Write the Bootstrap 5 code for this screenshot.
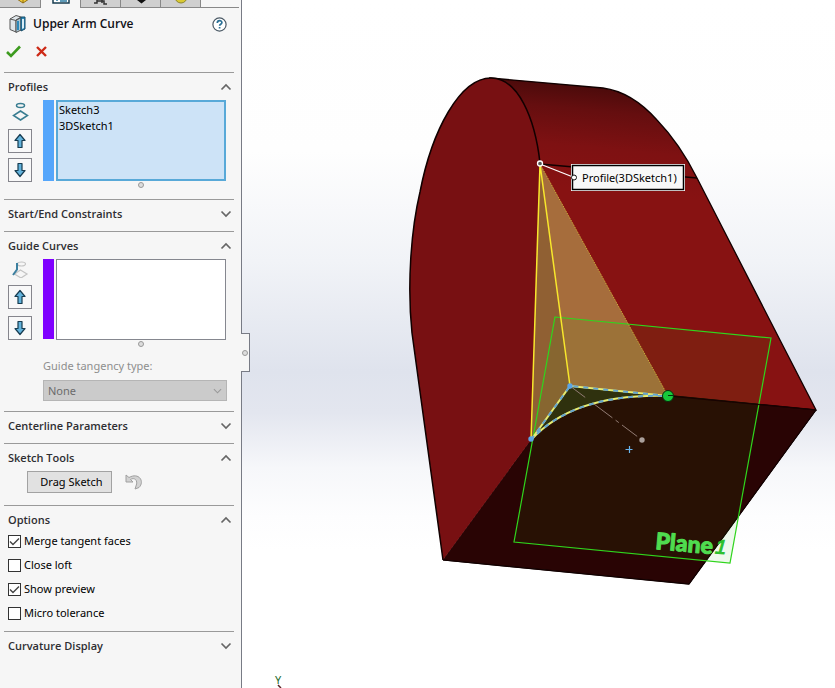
<!DOCTYPE html>
<html lang="en">
<head>
<meta charset="utf-8">
<meta name="viewport" content="width=device-width, initial-scale=1">
<title>Upper Arm Curve</title>
<link href="https://cdn.jsdelivr.net/npm/bootstrap@5.3.0/dist/css/bootstrap.min.css" rel="stylesheet">
<style>
body{font-family:"Noto Sans","Open Sans",sans-serif;font-size:11px;line-height:16px;color:#000;background:#fff}
.pm{width:242px;background:#f6f6f6;border-right:1px solid #787b85}
.tabs{height:8px;padding-right:2px}
.tabs::after{content:"";flex:1;border-bottom:1px solid #888}
.ptab{width:40px;height:8px;padding:0;border:0;border-right:1px solid #888;border-bottom:1px solid #888;background:#cfcfcf;overflow:hidden;display:flex;justify-content:center}
.ptab:first-child{width:41px}
.ptab.on{background:#f6f6f6;border-bottom:0}
.ptab svg{flex:none}
.title-row{height:32px;padding:0 14px 0 8px}
.title-row h1{font-family:"Open Sans",sans-serif;font-size:12px;line-height:20px;font-weight:600;margin:0 0 0 7px;color:#111116}
.plain{border:0;background:none;padding:0;display:flex;align-items:center}
.okrow{height:32px;padding:0 6px 10px;gap:15px}
.sec{margin:0 7px 0 4px;border-top:1px solid #9a9a9a}
.sec-head{width:100%;height:27px;padding:0 2px 0 4px;font-family:"Open Sans",sans-serif;font-weight:600;color:#2e2e32}
.shut{padding-bottom:4px}
.sec-body{padding:0 8px 11px 4px}
.icol{width:24px;margin-right:11px;gap:5px}
.icol.wide{gap:7px}
.arrow{width:24px;height:24px;border:1px solid #85858c;background:#f8f8f8;padding:0;display:flex;align-items:center;justify-content:center}
.colour{width:11px;height:81px;margin-right:2px}
.blue{background:#55a6fb}
.violet{background:#7f00ff;height:80px}
.picks{height:81px;border:1px solid #85878f;background:#fff;overflow:hidden;padding:2px}
.picks.live{border:2px solid #58a9d8;background:#cde3f7;padding:0 1px}
.grip{width:6px;height:6px;border:1px solid #999;border-radius:50%;background:#ddd}
.picks + .grip{margin-top:1px}
.tangency{padding:0 7px 10px 39px}
.tangency label{color:#8e8e8e;margin-bottom:6px}
.type-sel{height:21px;border:1px solid #b5b5b5;color:#6c6c6c;font-size:11px;line-height:16px;padding:0 4px;appearance:none;opacity:1;background:#cbcbcb url("data:image/svg+xml,%3Csvg xmlns='http://www.w3.org/2000/svg' viewBox='0 0 10 6'%3E%3Cpath d='M1 1l4 4 4-4' fill='none' stroke='%23999' stroke-width='1.2'/%3E%3C/svg%3E") no-repeat right 4px center/9px 6px}
.drag-row{padding:0 0 12px 23px;gap:13px}
.drag{width:85px;height:22px;border:1px solid #a2a2a2;background:#e1e1e1;padding:0 0 0 4px}
.opts{padding:0 0 10px 4px}
.opt{height:16px;gap:3px}
.opt input{appearance:none;width:13px;height:13px;border:1px solid #333;background:#fff}
.opt input:checked{background:#fff url("data:image/svg+xml,%3Csvg xmlns='http://www.w3.org/2000/svg' viewBox='0 0 11 11'%3E%3Cpath d='M1 5.500l3 3 6-6' fill='none' stroke='%23444' stroke-width='1.400'/%3E%3C/svg%3E")}
.stage{min-width:0;background:linear-gradient(#fff 0,#fefefe 22%,#f1f3f7 38%,#dfe3ed 54%,#e3e6ef 60%,#f6f7fa 68%,#fdfdfe 75%,#fff 80%)}
.model{width:100%;height:100%;display:block}
.flyout{left:-1px;top:333px;width:9px;height:39px;background:#f6f6f6;border:1px solid #787b85;border-left:0;padding:0;display:flex;align-items:center;justify-content:center}
.callout-text{font-size:11px}
.plane-name{font-family:Lato,sans-serif;font-size:23px;font-weight:900;fill:#4fdc4f;stroke:#4fdc4f;stroke-width:1px;stroke-linejoin:round}
.plane-num{font-family:"Liberation Sans",sans-serif;font-size:20px;font-style:italic;fill:#2bc02b;stroke:#2bc02b;stroke-width:1px}
.axis-name{font-size:11px;fill:#1d6b2d}
</style>
<script src="https://cdn.jsdelivr.net/npm/bootstrap@5.3.0/dist/js/bootstrap.bundle.min.js"></script>
</head>
<body>
<svg class="d-none" aria-hidden="true">
  <symbol id="up" viewBox="0 0 14 16"><path d="M7 1.500L12 7.500H9V14.500H5V7.500H2Z" fill="#63b3dc" stroke="#173c50" stroke-width="1.200" stroke-linejoin="round"/></symbol>
  <symbol id="down" viewBox="0 0 14 16"><path d="M7 14.500L12 8.500H9V1.500H5V8.500H2Z" fill="#63b3dc" stroke="#173c50" stroke-width="1.200" stroke-linejoin="round"/></symbol>
  <symbol id="chev-up" viewBox="0 0 12 8"><path d="M1.500 6.500L6 2 10.500 6.500" fill="none" stroke="#666" stroke-width="1.700"/></symbol>
  <symbol id="chev-down" viewBox="0 0 12 8"><path d="M1.500 1.500L6 6 10.500 1.500" fill="none" stroke="#666" stroke-width="1.700"/></symbol>
</svg>
<div class="d-flex vh-100 overflow-hidden">
  <aside class="pm flex-shrink-0">
    <nav class="tabs d-flex" aria-label="Manager tabs">
      <button class="ptab" aria-label="Feature tree"><svg width="20" height="7"><path d="M7 -1l6 4 6-4" fill="#f5cf3a" stroke="#8c6a12"/><path d="M13 0v3" stroke="#8c6a12"/></svg></button>
      <button class="ptab on" aria-label="Properties"><svg width="20" height="7"><path d="M2 0v3h16V0" fill="#fff" stroke="#173c50" stroke-width="1.500"/><path d="M5 0h2M9 1h7" stroke="#2a7ba3" stroke-width="1.500"/></svg></button>
      <button class="ptab" aria-label="Configurations"><svg width="20" height="7"><path d="M3 3h3V0M6 1h7v3h3M11 0v3" fill="none" stroke="#333" stroke-width="1.500"/></svg></button>
      <button class="ptab" aria-label="Dimensions"><svg width="20" height="7"><path d="M6 0h9l-4.500 3.500z" fill="#111"/></svg></button>
      <button class="ptab" aria-label="Appearances"><svg width="20" height="7"><circle cx="10" cy="-3" r="6" fill="#d9c933" stroke="#8b8530"/></svg></button>
    </nav>
    <header class="title-row d-flex align-items-center">
      <svg width="18" height="20" viewBox="0 0 18 20"><path d="M2 5l6-3.500 5 1.500-5 3v12l-6-2.500z" fill="#dfe6ea" stroke="#555"/><path d="M2 5l6 1.500 5-3" fill="none" stroke="#555"/><path d="M8 6.500l5-3v12.500l-5 2.500z" fill="#a9c6d4" stroke="#555"/><path d="M13 3l4 0v12l-4 2z" fill="#2c8abb" stroke="#174b67"/><path d="M10 7v9" stroke="#2c8abb" stroke-width="2"/><path d="M14 5h2v9l-2 1z" fill="#d9edf6"/></svg>
      <h1 class="flex-grow-1">Upper Arm Curve</h1>
      <button class="plain" aria-label="Help"><svg width="15" height="15" viewBox="0 0 15 15"><circle cx="7.500" cy="7.500" r="6.600" fill="#fff" stroke="#4c5a66" stroke-width="1.200"/><path d="M5.300 6c0-3 4.600-3 4.600-.4 0 1.600-2.300 1.700-2.300 3.200M7.600 10v1.600" fill="none" stroke="#2b7096" stroke-width="1.700"/></svg></button>
    </header>
    <div class="okrow d-flex align-items-center">
      <button class="plain" aria-label="OK"><svg width="15" height="13" viewBox="0 0 15 13"><path d="M1 7L5 11 14 1.500" fill="none" stroke="#3d9b1f" stroke-width="2.600"/></svg></button>
      <button class="plain" aria-label="Cancel"><svg width="11" height="11" viewBox="0 0 11 11"><path d="M1 1l9 9M10 1L1 10" stroke="#cd2a17" stroke-width="2.400"/></svg></button>
    </div>

    <section class="sec">
      <button class="plain sec-head justify-content-between">Profiles<svg width="12" height="8"><use href="#chev-up"/></svg></button>
      <div class="sec-body d-flex">
        <div class="icol d-flex flex-column">
          <svg width="24" height="24" viewBox="0 0 24 24" fill="none" stroke="#397d91" stroke-width="1.500"><ellipse cx="12.500" cy="5.500" rx="4" ry="2"/><path d="M12.500 11l7 4.500-7 4.500-7-4.500z"/></svg>
          <button class="arrow" aria-label="Move profile up"><svg width="14" height="16"><use href="#up"/></svg></button>
          <button class="arrow" aria-label="Move profile down"><svg width="14" height="16"><use href="#down"/></svg></button>
        </div>
        <div class="colour blue"></div>
        <div class="flex-grow-1 d-flex flex-column align-items-center">
          <div class="picks live w-100"><div>Sketch3</div><div>3DSketch1</div></div>
          <span class="grip"></span>
        </div>
      </div>
    </section>

    <section class="sec shut"><button class="plain sec-head justify-content-between">Start/End Constraints<svg width="12" height="8"><use href="#chev-down"/></svg></button></section>

    <section class="sec">
      <button class="plain sec-head justify-content-between">Guide Curves<svg width="12" height="8"><use href="#chev-up"/></svg></button>
      <div class="sec-body d-flex">
        <div class="icol wide d-flex flex-column">
          <svg width="24" height="19" viewBox="0 0 24 19" fill="none"><g stroke="#c3c3c3" stroke-width="1.200"><ellipse cx="13.500" cy="5" rx="4" ry="2"/><path d="M12.500 11l6.500 4-6 4-6.500-4z"/></g><path d="M9 4v6.500L5 16" stroke="#3b7f9f" stroke-width="2"/></svg>
          <button class="arrow" aria-label="Move guide up"><svg width="14" height="16"><use href="#up"/></svg></button>
          <button class="arrow" aria-label="Move guide down"><svg width="14" height="16"><use href="#down"/></svg></button>
        </div>
        <div class="colour violet"></div>
        <div class="flex-grow-1 d-flex flex-column align-items-center">
          <div class="picks w-100"></div>
          <span class="grip"></span>
        </div>
      </div>
      <div class="tangency">
        <label class="d-block" for="tangency">Guide tangency type:</label>
        <select class="type-sel d-block w-100" id="tangency" disabled><option>None</option></select>
      </div>
    </section>

    <section class="sec shut"><button class="plain sec-head justify-content-between">Centerline Parameters<svg width="12" height="8"><use href="#chev-down"/></svg></button></section>

    <section class="sec">
      <button class="plain sec-head justify-content-between">Sketch Tools<svg width="12" height="8"><use href="#chev-up"/></svg></button>
      <div class="drag-row d-flex align-items-center">
        <button class="drag">Drag Sketch</button>
        <button class="plain" aria-label="Undo drag"><svg width="19" height="18" viewBox="0 0 19 18"><path d="M1 2v7h7L5.500 6.500C9 4 13.500 7 11 13l-1 3 4-1.500C20 8.500 14-1 4 4.500z" fill="#d2d2d2" stroke="#a0a0a0"/></svg></button>
      </div>
    </section>

    <section class="sec">
      <button class="plain sec-head justify-content-between">Options<svg width="12" height="8"><use href="#chev-up"/></svg></button>
      <div class="opts d-flex flex-column gap-2">
        <label class="opt d-flex align-items-center"><input type="checkbox" checked>Merge tangent faces</label>
        <label class="opt d-flex align-items-center"><input type="checkbox">Close loft</label>
        <label class="opt d-flex align-items-center"><input type="checkbox" checked>Show preview</label>
        <label class="opt d-flex align-items-center"><input type="checkbox">Micro tolerance</label>
      </div>
    </section>

    <section class="sec"><button class="plain sec-head justify-content-between">Curvature Display<svg width="12" height="8"><use href="#chev-down"/></svg></button></section>
  </aside>

  <main class="stage flex-grow-1 position-relative">
    <svg class="model" viewBox="242 0 593 688" preserveAspectRatio="xMinYMin meet" role="img" aria-label="Loft preview of the upper arm">
      <defs>
        <linearGradient id="roll" gradientUnits="userSpaceOnUse" x1="600" y1="84" x2="590" y2="190">
          <stop offset="0" stop-color="#480a0a"/><stop offset=".25" stop-color="#650e0f"/><stop offset=".6" stop-color="#7e1112"/><stop offset="1" stop-color="#871212"/>
        </linearGradient>
      </defs>
      <path d="M490 78L603 88Q632 92 657 120Q680 144 697 178L780 340 816 410 570 386 539 163z" fill="url(#roll)" stroke="#100" stroke-width="1.300"/>
      <path d="M443 560L531 440 570 386 816 410 689 584z" fill="#290404" stroke="#180202"/>
      <path d="M443 560L412 333C407 285 411 230 420 192C432 130 460 78 491 78C518 78 535 118 540 163L531 440z" fill="#781012"/>
      <path d="M443 560L412 333C407 285 411 230 420 192C432 130 460 78 491 78C518 78 535 118 540 163" fill="none" stroke="#100" stroke-width="1.500"/>
      <path d="M443 560L689 584 816 410" fill="none" stroke="#100" stroke-width="1.200"/>
      <path d="M540 164L697 178" stroke="#100" stroke-width="1.300"/>
      <path d="M540 164L570 386 531 440z" fill="#906033"/>
      <path d="M540 164L668 396 570 386z" fill="#a66d3c"/>
      <path d="M570 386L668 396Q574 393 531 440z" fill="#30270f"/>
      <path d="M555 317L771 338 730 563 514 542z" fill="#20b010" fill-opacity=".08" stroke="#30d51d" stroke-width="1.200"/>
      <path d="M668 396L816 410" stroke="#180202"/>
      <path d="M540 164L531 440M540 164L570 386" stroke="#f8e72c" stroke-width="1.500"/>
      <path d="M540 164L668 396" stroke="#d4b83b" stroke-dasharray="1 1"/>
      <g fill="none" stroke-width="2"><path d="M531 440L570 386 668 396Q574 393 531 440" stroke="#e6ed72"/><path d="M531 440L570 386 668 396Q574 393 531 440" stroke="#64a4d2" stroke-dasharray="5 5"/></g>
      <path d="M570 386L642 440" stroke="#917b73" stroke-dasharray="19 11 23 4 4 4"/>
      <circle cx="642" cy="440" r="2.700" fill="#aaa09c"/>
      <path d="M625.500 449.500h7M629.500 446v7" fill="none" stroke="#69b5ef" stroke-width="1.200"/>
      <circle cx="570" cy="386" r="2.700" fill="#5ba4e5"/><circle cx="531" cy="439" r="2.700" fill="#5ba4e5"/>
      <circle cx="668" cy="396" r="5.500" fill="#16c83b" stroke="#062d0c"/><path d="M668 395.500h5" stroke="#062d0c"/>
      <g transform="rotate(5 654 549)"><text class="plane-name" x="655" y="549">Plane</text><text class="plane-num" x="715" y="548">1</text></g>
      <rect x="571" y="164" width="114" height="27" fill="#fff"/><rect x="572.500" y="165.500" width="111" height="24" fill="#f8f8f8" stroke="#000" stroke-width="1.500"/>
      <path d="M540 164L573 177" stroke="#fff" stroke-width="1.300"/>
      <circle cx="574" cy="177.500" r="2.500" fill="#fff" stroke="#111"/><circle cx="540" cy="163.500" r="2.500" fill="#555" stroke="#fff" stroke-width="1.300"/>
      <text class="callout-text" x="582" y="182">Profile(3DSketch1)</text>
      <text class="axis-name" x="275" y="684">Y</text><path d="M278 685l3 3" stroke="#522" stroke-width="1.500"/>
    </svg>
    <button class="flyout position-absolute" aria-label="Collapse panel"><span class="grip"></span></button>
  </main>
</div>
</body>
</html>
